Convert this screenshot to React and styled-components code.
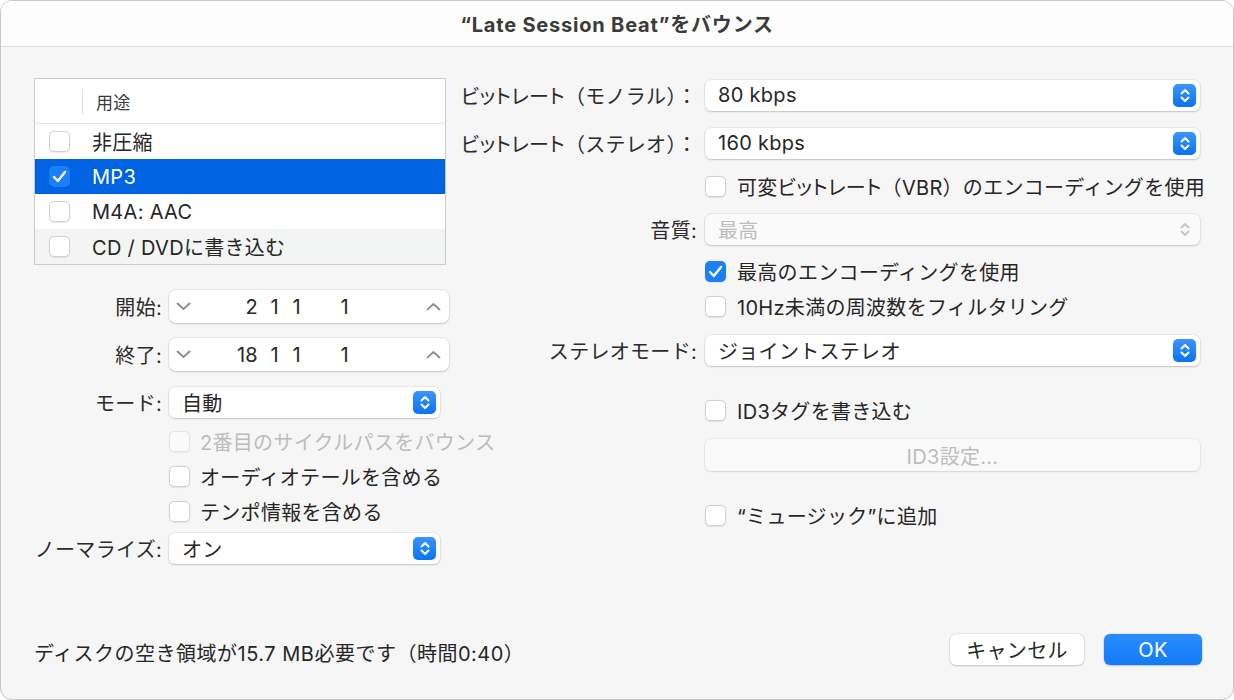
import React from "react";
import styled, { createGlobalStyle } from "styled-components";

const GlobalStyle = createGlobalStyle`
  html, body {
    margin: 0;
    padding: 0;
    background: #ffffff;
  }
  body {
    font-family: Inter, "Noto Sans CJK JP", sans-serif;
    -webkit-font-smoothing: antialiased;
  }
`;

const BLUE = "#1a7ff8";

const Window = styled.div`
  width: 1234px;
  height: 700px;
  box-sizing: border-box;
  border: 1px solid #c6c6c6;
  border-radius: 12px;
  overflow: hidden;
  background: #f6f6f6;
  display: flex;
  flex-direction: column;
  color: #262626;
  font-size: 20px;
  letter-spacing: 0.3px;
`;

const TitleBar = styled.div`
  height: 45px;
  flex: none;
  background: #fdfdfd;
  border-bottom: 1px solid #dedede;
  display: flex;
  align-items: center;
  justify-content: center;
  font-weight: 700;
  font-size: 20px;
  letter-spacing: 0.8px;
  color: #3b3b3b;
`;

const Main = styled.div`
  flex: 1;
  min-height: 0;
  display: grid;
  grid-template-columns: 415px 740px;
  column-gap: 11px;
  padding-left: 33px;
  align-items: start;
`;

const Column = styled.div`
  display: flex;
  flex-direction: column;
  padding-top: ${(p) => p.$top}px;
`;

const ListBox = styled.div`
  width: 412px;
  box-sizing: border-box;
  border: 1px solid #c9c9c9;
  background: #ffffff;
`;

const ListHeader = styled.div`
  height: 44px;
  border-bottom: 1px solid #e2e2e2;
  display: flex;
  align-items: center;
  font-size: 17px;
  color: #3a3a3a;
`;

const HeaderDivider = styled.span`
  width: 1px;
  height: 25px;
  margin-left: 47px;
  margin-right: 13px;
  background: #e0e0e0;
`;

const ListRow = styled.div`
  height: 35px;
  display: flex;
  align-items: center;
  gap: 22px;
  padding-left: 14px;
  background: ${(p) => (p.$selected ? "#0063e1" : p.$alt ? "#f3f4f4" : "#ffffff")};
  color: ${(p) => (p.$selected ? "#ffffff" : "#262626")};
`;

const Field = styled.div`
  display: grid;
  grid-template-columns: ${(p) => p.$label}px ${(p) => p.$control}px;
  column-gap: ${(p) => p.$gap}px;
  align-items: center;
  margin-top: ${(p) => p.$mt || 0}px;
`;

const Label = styled.span`
  text-align: right;
  white-space: nowrap;
  color: #2b2b2b;
`;

// proportional kana, the way the system font sets ビットレート
const Tight = styled.span`
  font-feature-settings: "palt";
`;

const Popup = styled.div`
  height: 31px;
  box-sizing: border-box;
  background: ${(p) => (p.$disabled ? "#fafafa" : "#ffffff")};
  border-radius: 6px;
  box-shadow: 0 0 0 0.5px rgba(0, 0, 0, 0.1), 0 1px 2px rgba(0, 0, 0, 0.16);
  display: flex;
  align-items: center;
  justify-content: space-between;
  padding: 0 4px 1px 13px;
  color: ${(p) => (p.$disabled ? "#bdbdbd" : "#262626")};
`;

const StepperKnob = styled.span`
  width: 23px;
  height: 23px;
  margin-top: 1px;
  border-radius: 5px;
  background: ${(p) => (p.$disabled ? "transparent" : "linear-gradient(#3b94ff, #0b73f0)")};
  display: flex;
  align-items: center;
  justify-content: center;
`;

const TimeField = styled.div`
  height: 33px;
  box-sizing: border-box;
  background: #ffffff;
  border-radius: 7px;
  box-shadow: 0 0 0 0.5px rgba(0, 0, 0, 0.1), 0 1px 2px rgba(0, 0, 0, 0.16);
  display: flex;
  align-items: center;
  padding: 0 8px 0 7px;
`;

const Num = styled.span`
  width: ${(p) => p.$w}px;
  text-align: right;
  flex: none;
`;

const Spacer = styled.span`
  flex: 1;
`;

const CheckRow = styled.div`
  height: 24px;
  display: flex;
  align-items: center;
  gap: ${(p) => p.$gap || 10}px;
  margin-top: ${(p) => p.$mt || 0}px;
  margin-left: ${(p) => p.$indent}px;
  color: ${(p) => (p.$disabled ? "#bcbcbc" : "#262626")};
  white-space: nowrap;
`;

const Box = styled.span`
  width: 21px;
  height: 21px;
  flex: none;
  box-sizing: border-box;
  border-radius: 5px;
  background: ${(p) => (p.$checked ? BLUE : "#ffffff")};
  border: ${(p) => (p.$checked ? "none" : "1px solid #d0d0d0")};
  box-shadow: 0 0.5px 1px rgba(0, 0, 0, 0.08);
  opacity: ${(p) => (p.$disabled ? 0.45 : 1)};
  display: flex;
  align-items: center;
  justify-content: center;
`;

const WideButton = styled.div`
  margin-top: ${(p) => p.$mt}px;
  margin-left: 245px;
  width: 495px;
  height: 32px;
  border-radius: 6px;
  background: #f9f9f9;
  box-shadow: 0 0 0 0.5px rgba(0, 0, 0, 0.08), 0 1px 2px rgba(0, 0, 0, 0.1);
  color: #bdbdbd;
  display: flex;
  align-items: center;
  justify-content: center;
`;

const Footer = styled.div`
  flex: none;
  display: flex;
  align-items: center;
  padding: 0 31px 32px 33px;
`;

const Info = styled.span`
  flex: 1;
  padding-top: 6px;
  letter-spacing: 0.5px;
  color: #262626;
`;

const Button = styled.div`
  height: 31px;
  width: ${(p) => p.$w}px;
  margin-left: ${(p) => p.$ml || 0}px;
  border-radius: 6px;
  display: flex;
  align-items: center;
  justify-content: center;
  background: ${(p) => (p.$primary ? "linear-gradient(#2a8cff, #137bf7)" : "#ffffff")};
  color: ${(p) => (p.$primary ? "#ffffff" : "#262626")};
  box-shadow: 0 0 0 0.5px rgba(0, 0, 0, 0.12), 0 1px 2px rgba(0, 0, 0, 0.16);
`;

const Chevron = ({ dir, color }) => (
  <svg width="15" height="9" viewBox="0 0 15 9" fill="none">
    <path
      d={dir === "down" ? "M1.5 1.5 L7.5 7 L13.5 1.5" : "M1.5 7.5 L7.5 2 L13.5 7.5"}
      stroke={color}
      strokeWidth="1.8"
      strokeLinecap="round"
      strokeLinejoin="round"
    />
  </svg>
);

const UpDown = ({ color }) => (
  <svg width="12" height="17" viewBox="0 0 12 17" fill="none">
    <path d="M2.5 6.5 L6 3 L9.5 6.5" stroke={color} strokeWidth="2" strokeLinecap="round" strokeLinejoin="round" />
    <path d="M2.5 10.5 L6 14 L9.5 10.5" stroke={color} strokeWidth="2" strokeLinecap="round" strokeLinejoin="round" />
  </svg>
);

const Check = () => (
  <svg width="15" height="13" viewBox="0 0 15 13" fill="none">
    <path d="M2 7 L5.8 11 L13 2" stroke="#ffffff" strokeWidth="2.4" strokeLinecap="round" strokeLinejoin="round" />
  </svg>
);

function CheckBox({ checked, disabled }) {
  return <Box $checked={checked} $disabled={disabled}>{checked && <Check />}</Box>;
}

function PopupButton({ value, disabled }) {
  return (
    <Popup $disabled={disabled}>
      <span>{value}</span>
      <StepperKnob $disabled={disabled}>
        <UpDown color={disabled ? "#c6c6c6" : "#ffffff"} />
      </StepperKnob>
    </Popup>
  );
}

function TimeStepper({ values }) {
  const widths = [67, 21, 22, 48];
  return (
    <TimeField>
      <Chevron dir="down" color="#8d8d8d" />
      {values.map((v, i) => (
        <Num key={i} $w={widths[i]}>{v}</Num>
      ))}
      <Spacer />
      <Chevron dir="up" color="#8d8d8d" />
    </TimeField>
  );
}

const formats = [
  { name: "非圧縮" },
  { name: "MP3", checked: true, selected: true },
  { name: "M4A: AAC" },
  { name: "CD / DVDに書き込む", alt: true },
];

export default function App() {
  return (
    <>
      <GlobalStyle />
      <Window>
        <TitleBar>“Late Session Beat”をバウンス</TitleBar>
        <Main>
          <Column $top={31}>
            <ListBox>
              <ListHeader>
                <HeaderDivider />
                <span>用途</span>
              </ListHeader>
              {formats.map((f) => (
                <ListRow key={f.name} $selected={f.selected} $alt={f.alt}>
                  <CheckBox checked={f.checked} />
                  <span>{f.name}</span>
                </ListRow>
              ))}
            </ListBox>

            <Field $label={128} $control={280} $gap={7} $mt={25}>
              <Label>開始:</Label>
              <TimeStepper values={["2", "1", "1", "1"]} />
            </Field>
            <Field $label={128} $control={280} $gap={7} $mt={15}>
              <Label>終了:</Label>
              <TimeStepper values={["18", "1", "1", "1"]} />
            </Field>
            <Field $label={128} $control={271} $gap={7} $mt={16}>
              <Label>モード:</Label>
              <PopupButton value="自動" />
            </Field>
            <CheckRow $indent={135} $mt={11} $disabled>
              <CheckBox disabled />
              <span>2番目のサイクルパスをバウンス</span>
            </CheckRow>
            <CheckRow $indent={135} $mt={11}>
              <CheckBox />
              <span>オーディオテールを含める</span>
            </CheckRow>
            <CheckRow $indent={135} $mt={11}>
              <CheckBox />
              <span>テンポ情報を含める</span>
            </CheckRow>
            <Field $label={128} $control={271} $gap={7} $mt={10}>
              <Label>ノーマライズ:</Label>
              <PopupButton value="オン" />
            </Field>
          </Column>

          <Column $top={33}>
            <Field $label={237} $control={495} $gap={8}>
              <Label>
                <Tight>ビットレート</Tight>（モノラル）：
              </Label>
              <PopupButton value="80 kbps" />
            </Field>
            <Field $label={237} $control={495} $gap={8} $mt={17}>
              <Label>
                <Tight>ビットレート</Tight>（ステレオ）：
              </Label>
              <PopupButton value="160 kbps" />
            </Field>
            <CheckRow $indent={245} $gap={11} $mt={15}>
              <CheckBox />
              <span>
                可変<Tight>ビットレート</Tight>（VBR）のエンコーディングを使用
              </span>
            </CheckRow>
            <Field $label={237} $control={495} $gap={8} $mt={16}>
              <Label>音質:</Label>
              <PopupButton value="最高" disabled />
            </Field>
            <CheckRow $indent={245} $gap={11} $mt={14}>
              <CheckBox checked />
              <span>最高のエンコーディングを使用</span>
            </CheckRow>
            <CheckRow $indent={245} $gap={11} $mt={11}>
              <CheckBox />
              <span>10Hz未満の周波数をフィルタリング</span>
            </CheckRow>
            <Field $label={237} $control={495} $gap={8} $mt={17}>
              <Label>ステレオモード:</Label>
              <PopupButton value="ジョイントステレオ" />
            </Field>
            <CheckRow $indent={245} $gap={11} $mt={32}>
              <CheckBox />
              <span>ID3タグを書き込む</span>
            </CheckRow>
            <WideButton $mt={17}>ID3設定...</WideButton>
            <CheckRow $indent={245} $gap={11} $mt={32}>
              <CheckBox />
              <span>“ミュージック”に追加</span>
            </CheckRow>
          </Column>
        </Main>
        <Footer>
          <Info>ディスクの空き領域が15.7 MB必要です（時間0:40）</Info>
          <Button $w={134}>キャンセル</Button>
          <Button $w={98} $ml={20} $primary>OK</Button>
        </Footer>
      </Window>
    </>
  );
}
